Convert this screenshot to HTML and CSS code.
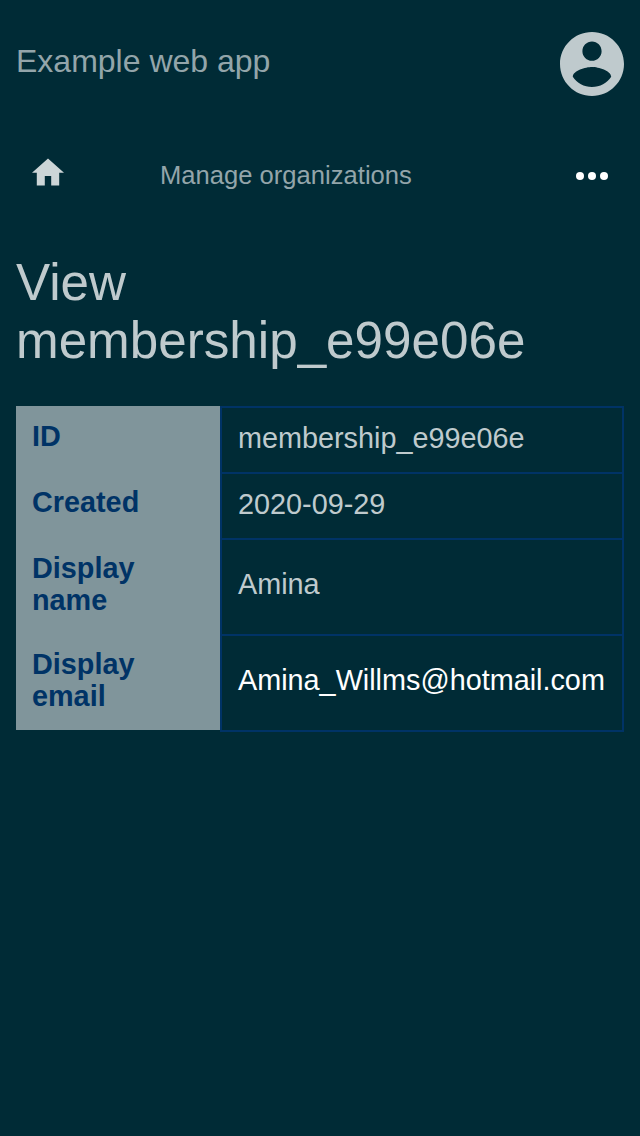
FILE: index.html
```html
<!DOCTYPE html>
<html lang="en">
<head>
<meta charset="utf-8">
<title>View membership</title>
<link rel="stylesheet" href="styles.css">
</head>
<body>
<header class="top">
  <span class="brand">Example web app</span>
  <svg class="avatar" viewBox="2 2 20 20"><path d="M12 2C6.480 2 2 6.480 2 12s4.480 10 10 10 10-4.480 10-10S17.520 2 12 2zm0 3c1.660 0 3 1.340 3 3s-1.340 3-3 3-3-1.340-3-3 1.340-3 3-3zm0 14.200c-2.500 0-4.710-1.280-6-3.220.030-1.990 4-3.080 6-3.080 1.990 0 5.970 1.090 6 3.080-1.290 1.940-3.500 3.220-6 3.220z"/></svg>
</header>
<nav class="nav">
  <svg class="home" viewBox="2 0.25 20 20"><path d="M10 20v-6h4v6h5v-8h3L12 3 2 12h3v8z"/></svg>
  <span class="crumb">Manage organizations</span>
  <svg class="more" viewBox="0 0 32 8"><circle cx="4" cy="4" r="4"/><circle cx="16" cy="4" r="4"/><circle cx="28" cy="4" r="4"/></svg>
</nav>
<main class="main">
  <h1 class="title">View membership_e99e06e</h1>
  <dl class="details">
    <dt>ID</dt><dd>membership_e99e06e</dd>
    <dt>Created</dt><dd>2020-09-29</dd>
    <dt>Display name</dt><dd class="tall">Amina</dd>
    <dt>Display email</dt><dd class="tall link">Amina_Willms@hotmail.com</dd>
  </dl>
</main>
</body>
</html>
```
FILE: styles.css
```css
* { box-sizing: border-box; }
body {
  margin: 0;
  min-height: 1136px;
  background: #002b36;
  color: #bfcacd;
  font-family: "Liberation Sans", Arial, sans-serif;
}
.top {
  display: flex;
  justify-content: space-between;
  height: 128px;
  padding: 32px 16px;
}
.brand { padding-top: 11px; font-size: 32px; line-height: 37px; color: #93a5aa; }
.avatar { width: 64px; height: 64px; fill: #bfcacd; }
.nav {
  display: flex;
  height: 96px;
  padding: 0 32px;
  align-items: flex-start;
}
.home { width: 32px; height: 32px; margin-top: 26px; fill: #ccd5d7; }
.crumb { margin: 32px auto 0 96px; font-size: 25.6px; line-height: 30px; color: #93a5aa; }
.more { width: 32px; height: 8px; margin-top: 44px; fill: #fff; }
.main { padding: 30px 16px 0; }
.title { margin: 0 0 36px; font-size: 51.2px; line-height: 58px; font-weight: 400; }
.details {
  display: grid;
  grid-template-columns: 204px 404px;
  grid-template-rows: 66px 66px 96px 96px;
  margin: 0;
  font-size: 28.8px;
  line-height: 32px;
}
.details dt {
  padding: 14px 16px;
  background: #80959b;
  color: #003366;
  font-weight: 700;
}
.details dd {
  margin: 0 0 -2px;
  padding: 14px 16px;
  border: 2px solid #003366;
}
.details .tall { padding-top: 28px; }
.details .link { color: #fff; }
```
